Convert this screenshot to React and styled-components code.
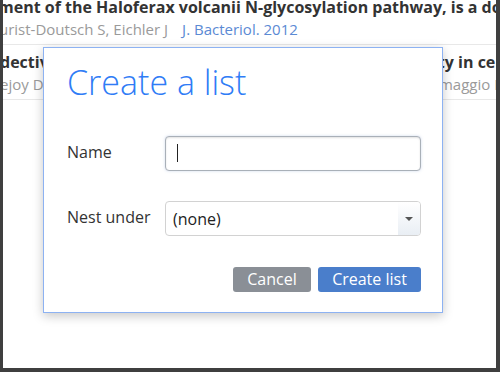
import React from 'react';
import styled, { createGlobalStyle } from 'styled-components';

const GlobalStyle = createGlobalStyle`
  html, body {
    margin: 0;
    padding: 0;
    background: #ffffff;
  }
  body {
    font-family: 'Open Sans', 'Liberation Sans', sans-serif;
  }
`;

const Frame = styled.div`
  position: relative;
  box-sizing: border-box;
  width: 500px;
  height: 372px;
  overflow: hidden;
  border-left: 3px solid #3f3f3f;
  border-right: 4px solid #3f3f3f;
  border-bottom: 4px solid #3f3f3f;
  background: #ffffff;
`;

const ResultList = styled.div`
  display: flex;
  flex-direction: column;
  margin-top: -4px;
`;

const Result = styled.div`
  padding: ${props => (props.first ? '0' : '6px')} 0 4px;
  border-bottom: 1px solid #e8e8e8;
  overflow: hidden;
`;

const Title = styled.div`
  font-size: 16px;
  line-height: 22px;
  font-weight: 700;
  color: #333333;
  white-space: nowrap;
  margin-left: ${props => props.shift || 0}px;
`;

const Meta = styled.div`
  font-size: 15px;
  line-height: 22px;
  color: #9a9a9a;
  white-space: nowrap;
  margin-left: ${props => props.shift || 0}px;
`;

const Journal = styled.span`
  color: #5b8ad4;
  margin-left: 14px;
`;

const Dialog = styled.div`
  position: absolute;
  left: 40px;
  top: 47px;
  box-sizing: border-box;
  width: 400px;
  height: 266px;
  background: #ffffff;
  border: 1px solid #8db2f2;
  box-shadow: 0 3px 10px rgba(0, 0, 0, 0.22);
  padding: 14px 21px 0 23px;
  display: flex;
  flex-direction: column;
`;

const DialogTitle = styled.h2`
  margin: 0;
  font-size: 34px;
  line-height: 41px;
  font-weight: 300;
  color: #2f7cf6;
`;

const Form = styled.div`
  display: grid;
  grid-template-columns: 98px 1fr;
  row-gap: 30px;
  align-items: center;
  margin-top: 33px;
`;

const Label = styled.label`
  font-size: 16px;
  line-height: 22px;
  margin-top: -3px;
  color: #333333;
`;

const InputBox = styled.div`
  position: relative;
  box-sizing: border-box;
  height: 35px;
  border: 1px solid #a9b0b8;
  border-radius: 4px;
  box-shadow: inset 0 1px 2px rgba(0, 0, 0, 0.12), 0 0 3px rgba(120, 150, 200, 0.35);
  background: #ffffff;
`;

const Caret = styled.span`
  position: absolute;
  left: 11px;
  top: 7px;
  width: 1px;
  height: 18px;
  background: #222222;
`;

const Select = styled.div`
  box-sizing: border-box;
  height: 35px;
  border: 1px solid #d2d2d2;
  border-radius: 4px;
  display: flex;
  align-items: stretch;
  overflow: hidden;
`;

const SelectValue = styled.span`
  flex: 1;
  display: flex;
  align-items: center;
  padding-left: 7px;
  font-size: 16px;
  color: #222222;
`;

const SelectArrow = styled.span`
  width: 22px;
  display: flex;
  align-items: center;
  justify-content: center;
  background: linear-gradient(#ffffff, #e9eef4);

  &::after {
    content: '';
    border-left: 4px solid transparent;
    border-right: 4px solid transparent;
    border-top: 4px solid #555555;
  }
`;

const Actions = styled.div`
  display: flex;
  justify-content: flex-end;
  gap: 7px;
  margin-top: 31px;
`;

const Button = styled.button`
  height: 25px;
  padding: 0;
  width: ${props => props.width}px;
  border: none;
  border-radius: 3px;
  background: ${props => (props.primary ? '#4a7ecb' : '#8a8f96')};
  color: #ffffff;
  font-family: 'Open Sans', 'Liberation Sans', sans-serif;
  font-size: 16px;
  line-height: 25px;
  cursor: pointer;
`;

export default function App() {
  return (
    <>
      <GlobalStyle />
      <Frame>
        <ResultList>
          <Result first>
            <Title shift={-5}>ment of the Haloferax volcanii N-glycosylation pathway, is a dolichol phosphate</Title>
            <Meta shift={-4}>
              urist-Doutsch S, Eichler J
              <Journal>J. Bacteriol. 2012</Journal>
            </Meta>
          </Result>
          <Result>
            <Title shift={-3}>dectivity of the host glycosylation enzymes show activity in cells</Title>
            <Meta shift={-3}>ejoy D, Calo D, Guan Z, Shaananov B, Eichler J, Konrads Z, Giammaggio D</Meta>
          </Result>
        </ResultList>
        <Dialog>
          <DialogTitle>Create a list</DialogTitle>
          <Form>
            <Label>Name</Label>
            <InputBox>
              <Caret />
            </InputBox>
            <Label>Nest under</Label>
            <Select>
              <SelectValue>(none)</SelectValue>
              <SelectArrow />
            </Select>
          </Form>
          <Actions>
            <Button width={78}>Cancel</Button>
            <Button primary width={103}>Create list</Button>
          </Actions>
        </Dialog>
      </Frame>
    </>
  );
}
